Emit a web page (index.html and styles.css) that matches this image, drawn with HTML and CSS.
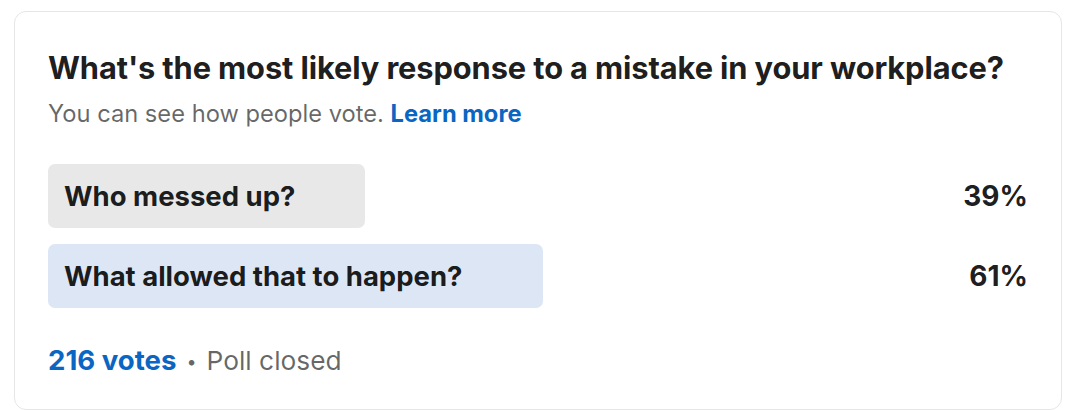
FILE: index.html
```html
<!DOCTYPE html>
<html lang="en">
<head>
<meta charset="utf-8">
<title>Poll</title>
<link rel="stylesheet" href="styles.css">
</head>
<body>
<div class="card">
  <h2 class="question">What's the most likely response to a mistake in your workplace?</h2>
  <p class="subtitle">You can see how people vote. <a class="link" href="#">Learn more</a></p>
  <div class="options">
    <div class="option">
      <div class="track"><div class="bar bar-gray" style="width:39%"><span class="label">Who messed up?</span></div></div>
      <div class="pct">39%</div>
    </div>
    <div class="option">
      <div class="track"><div class="bar bar-blue" style="width:61%"><span class="label">What allowed that to happen?</span></div></div>
      <div class="pct">61%</div>
    </div>
  </div>
  <div class="footer"><span class="votes">216 votes</span><span class="dot">•</span><span class="closed">Poll closed</span></div>
</div>
</body>
</html>
```
FILE: styles.css
```css
html, body {
  margin: 0;
  padding: 0;
  background: #ffffff;
}
body {
  font-family: "Inter", "Liberation Sans", sans-serif;
  color: rgba(0, 0, 0, 0.9);
}
.card {
  margin: 11px 26px 0 14px;
  border: 1px solid #e6e6e6;
  border-radius: 12px;
  padding: 38px 33px 0 33px;
  height: 399px;
  box-sizing: border-box;
}
.question {
  margin: 0;
  font-size: 30.8px;
  line-height: 36px;
  font-weight: 700;
  letter-spacing: -0.1px;
  white-space: nowrap;
}
.subtitle {
  margin: 14px 0 0 0;
  font-size: 23.7px;
  line-height: 28px;
  color: rgba(0, 0, 0, 0.6);
}
.link {
  color: #0a66c2;
  font-weight: 700;
  text-decoration: none;
}
.options {
  margin-top: 36px;
  display: flex;
  flex-direction: column;
  gap: 16px;
}
.option {
  display: flex;
  align-items: center;
}
.track {
  flex: 1;
}
.bar {
  height: 64px;
  border-radius: 7px;
  display: flex;
  align-items: center;
  padding-left: 16px;
  box-sizing: border-box;
  white-space: nowrap;
}
.bar-gray {
  background: #e8e8e8;
}
.bar-blue {
  background: #dce6f5;
}
.label {
  font-size: 27.5px;
  font-weight: 700;
}
.pct {
  width: 168px;
  text-align: right;
  font-size: 28px;
  font-weight: 700;
}
.footer {
  margin-top: 34px;
  font-size: 26.3px;
  line-height: 36px;
  color: rgba(0, 0, 0, 0.6);
}
.votes {
  color: #0a66c2;
  font-weight: 700;
  font-size: 27.6px;
}
.dot {
  margin: 0 10px;
  font-size: 18px;
  vertical-align: 2px;
}
```
